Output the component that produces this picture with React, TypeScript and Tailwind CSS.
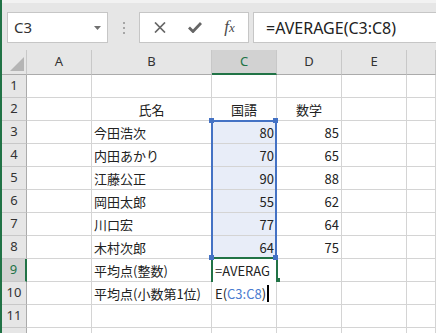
import React from "react"
import clsx from "clsx"

const names = ["今田浩次", "内田あかり", "江藤公正", "岡田太郎", "川口宏", "木村次郎"]
const kokugo = [80, 70, 90, 55, 77, 64]
const sugaku = [85, 65, 88, 62, 64, 75]

type Align = "left" | "center" | "right"

const alignClass: Record<Align, string> = {
  left: "justify-start pl-[2px]",
  center: "justify-center",
  right: "justify-end pr-[2px]",
}

function Cell({
  children,
  align = "left",
  className,
}: {
  children?: React.ReactNode
  align?: Align
  className?: string
}) {
  return (
    <div
      className={clsx(
        "flex items-center overflow-visible whitespace-nowrap border-r border-b border-[#d4d4d4] pt-[1px] text-[13px] text-[#222]",
        alignClass[align],
        className
      )}
    >
      {children}
    </div>
  )
}

function RowHeader({ n, active }: { n: number | null; active?: boolean }) {
  return (
    <div
      className={clsx(
        "flex items-center justify-center border-b border-[#c8c8c8] text-[13px] font-['Noto_Sans',sans-serif]",
        active
          ? "bg-[#d2d2d2] border-r-2 border-r-[#217346] text-[#217346]"
          : "bg-[#e6e6e6] border-r border-r-[#ababab] text-[#333]"
      )}
    >
      {n}
    </div>
  )
}

function ColHeader({ label, active }: { label: string; active?: boolean }) {
  return (
    <div
      className={clsx(
        "flex items-center justify-center border-r border-[#c8c8c8] text-[13px] font-['Noto_Sans',sans-serif]",
        active
          ? "bg-[#d2d2d2] border-b-2 border-b-[#217346] text-[#217346]"
          : "bg-[#e6e6e6] border-b border-b-[#ababab] text-[#333]"
      )}
    >
      {label}
    </div>
  )
}

function Toolbar() {
  return (
    <div className="flex h-[50px] shrink-0 items-start border-t-[3px] border-[#f2f2f2] bg-[#e6e6e6] pl-[5px] pt-[9px]">
      {/* name box */}
      <div className="relative flex h-[31px] w-[101px] items-center border border-[#c6c6c6] bg-white pl-[6px] text-[15px] text-[#333] font-['Noto_Sans',sans-serif]">
        C3
        <svg className="absolute right-[6px] top-[13px]" width="7" height="4" viewBox="0 0 7 4">
          <path d="M0 0H7L3.5 4Z" fill="#707070" />
        </svg>
      </div>
      {/* grip dots */}
      <div className="ml-[15px] mt-[10px] flex flex-col gap-[3px]">
        <span className="h-[2px] w-[2px] bg-[#a6a6a6]" />
        <span className="h-[2px] w-[2px] bg-[#a6a6a6]" />
        <span className="h-[2px] w-[2px] bg-[#a6a6a6]" />
      </div>
      {/* cancel / enter / fx */}
      <div className="ml-[14px] flex h-[31px] w-[110px] items-center border border-[#c6c6c6] bg-white pl-[2px]">
        <div className="flex w-[35px] justify-center">
          <svg width="12" height="11" viewBox="0 0 12 11">
            <path d="M1 0.5L11 10.5M11 0.5L1 10.5" stroke="#666" strokeWidth="1.7" />
          </svg>
        </div>
        <div className="flex w-[35px] justify-center">
          <svg width="14" height="11" viewBox="0 0 14 11">
            <path d="M1 5.5L5 9.5L13 1" stroke="#666" strokeWidth="2.8" fill="none" />
          </svg>
        </div>
        <div className="flex w-[35px] items-baseline justify-center pb-[2px] text-[#4a4a4a] italic font-['Liberation_Serif',serif]">
          <span className="text-[17px]">f</span>
          <span className="text-[13px]">x</span>
        </div>
      </div>
      {/* formula input */}
      <div className="ml-[4px] -mr-[2px] flex h-[31px] flex-1 items-center border border-[#c6c6c6] bg-white pl-[12px] text-[16px] text-[#222] font-['Noto_Sans',sans-serif]">
        =AVERAGE(C3:C8)
      </div>
    </div>
  )
}

export default function App() {
  const rows: React.ReactNode[] = []

  for (let r = 1; r <= 12; r++) {
    let b: React.ReactNode = null
    let bAlign: Align = "left"
    let c: React.ReactNode = null
    let cAlign: Align = "left"
    let d: React.ReactNode = null
    let dAlign: Align = "left"
    let cClass = ""

    if (r === 2) {
      b = "氏名"
      bAlign = "center"
      c = "国語"
      cAlign = "center"
      d = "数学"
      dAlign = "center"
    } else if (r >= 3 && r <= 8) {
      b = names[r - 3]
      c = kokugo[r - 3]
      cAlign = "right"
      d = sugaku[r - 3]
      dAlign = "right"
      cClass = "bg-[#e8edf8]"
    } else if (r === 9) {
      b = "平均点(整数)"
      c = "=AVERAG"
      cClass = "pl-[3px] border-b-white"
    } else if (r === 10) {
      b = "平均点(小数第1位)"
      c = (
        <span className="flex items-center">
          E(<span className="text-[#4a7bd0]">C3:C8</span>)
          <span className="ml-[1px] h-[17px] w-[2px] bg-black" />
        </span>
      )
      cClass = "pl-[3px]"
    }

    rows.push(
      <React.Fragment key={r}>
        {/* row 12 sits mostly below the window, its number is not visible */}
        <RowHeader n={r === 12 ? null : r} active={r === 9} />
        <Cell />
        <Cell align={bAlign}>{b}</Cell>
        <Cell align={cAlign} className={cClass}>
          {c}
        </Cell>
        <Cell align={dAlign}>{d}</Cell>
        <Cell />
        <Cell />
      </React.Fragment>
    )
  }

  return (
    <div className="flex h-[333px] w-[436px] flex-col overflow-hidden border-l-2 border-[#217346] bg-white font-['Noto_Sans_CJK_JP',sans-serif]">
      <Toolbar />
      <div className="relative grid grid-cols-[25px_65px_120px_65px_65px_65px_1fr] grid-rows-[25px_repeat(12,23px)]">
        {/* corner */}
        <div className="relative border-r border-b border-r-[#c8c8c8] border-b-[#ababab] bg-[#e6e6e6]">
          <svg className="absolute bottom-[3px] right-[2px]" width="14" height="14" viewBox="0 0 14 14">
            <path d="M14 0V14H0Z" fill="#b5b5b5" />
          </svg>
        </div>
        <ColHeader label="A" />
        <ColHeader label="B" />
        <ColHeader label="C" active />
        <ColHeader label="D" />
        <ColHeader label="E" />
        <ColHeader label="" />
        {rows}

        {/* range reference C3:C8 */}
        <div className="pointer-events-none absolute left-[209px] top-[70px] h-[139px] w-[66px] border-2 border-[#4472c4]" />
        <span className="absolute left-[207px] top-[68px] h-[5px] w-[5px] bg-[#4472c4]" />
        <span className="absolute left-[271px] top-[68px] h-[5px] w-[5px] bg-[#4472c4]" />

        {/* active cell C9 */}
        <div className="pointer-events-none absolute left-[209px] top-[207px] h-[25px] w-[67px] border-x-2 border-t-2 border-[#217346]" />
        <span className="absolute left-[207px] top-[205px] h-[5px] w-[5px] bg-[#4472c4]" />
        <span className="absolute left-[271px] top-[205px] h-[5px] w-[5px] bg-[#4472c4]" />
        <span className="absolute left-[274px] top-[228px] h-[4px] w-[4px] bg-[#217346]" />
      </div>
    </div>
  )
}
